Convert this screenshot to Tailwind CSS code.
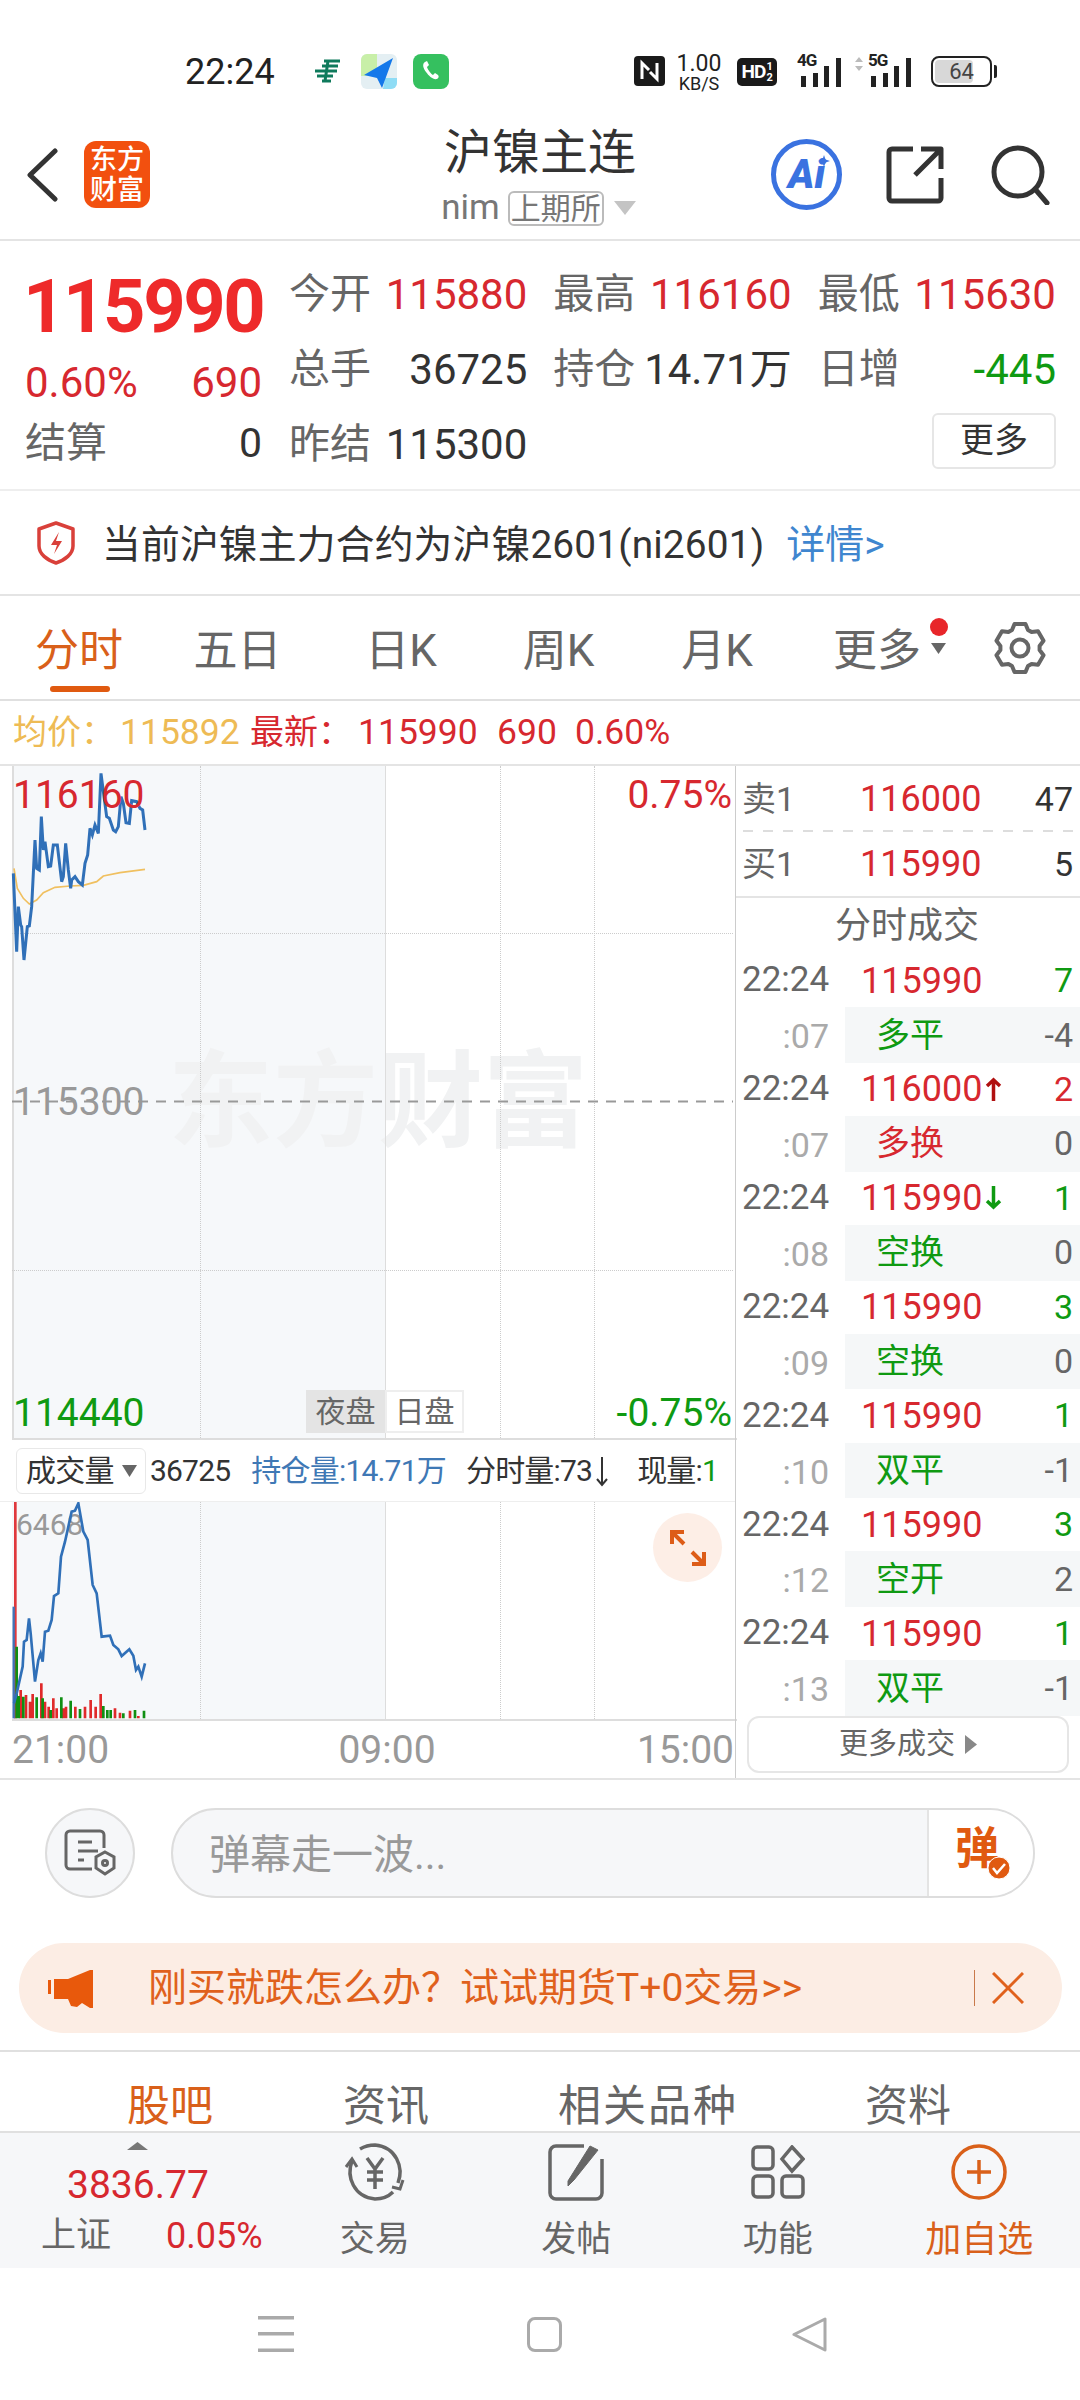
<!DOCTYPE html>
<html lang="zh">
<head>
    <meta charset="UTF-8">
    <meta name="viewport" content="width=device-width, initial-scale=1.0">
    <title>沪镍主连</title>
    <script src="https://cdn.jsdelivr.net/npm/@tailwindcss/browser@4"></script>
</head>
<body class="bg-white font-[Roboto,'Noto_Sans_CJK_SC',sans-serif] text-[#333]">
<div class="w-[1080px] h-[2400px] overflow-hidden flex flex-col">

    <!-- Status bar -->
    <div class="h-[110px] relative shrink-0">
        <span class="absolute left-[185px] top-[50px] text-[36px] leading-[44px] text-[#222]">22:24</span>
        <svg class="absolute left-[314px] top-[59px]" width="27" height="25" viewBox="0 0 27 25" fill="none" stroke="#0f7a5c" stroke-width="3"><path d="M10 2h16M8 7h16M1 12h22M3 17h16M8 22h9M14 2l-3 20"/></svg>
        <svg class="absolute left-[361px] top-[54px]" width="36" height="35" viewBox="0 0 36 35"><rect width="36" height="35" rx="6" fill="#e4eff3"/><path d="M0 6a6 6 0 0 1 6-6h10v22H0z" fill="#c8efa8"/><path d="M24 24h12v5a6 6 0 0 1-6 6h-8z" fill="#8fdcf5"/><path d="M32 4L3 21l13 3 5 10z" fill="#1478ea"/></svg>
        <svg class="absolute left-[413px] top-[54px]" width="36" height="35" viewBox="0 0 36 35"><rect width="36" height="35" rx="8" fill="#35c05f"/><path d="M12 8c-3 2-2 6 1 10s7 8 11 7c2-1 2-3 1-4l-3-2-2 2c-2-1-5-5-6-8l2-2-2-4z" fill="#fff"/></svg>
        <svg class="absolute left-[634px] top-[56px]" width="31" height="30" viewBox="0 0 31 30"><rect width="31" height="30" rx="4" fill="#1a1a1a"/><path d="M8 23V7l7 7M23 7v16l-7-7" fill="none" stroke="#fff" stroke-width="3"/></svg>
        <div class="absolute left-[670px] top-[52px] w-[58px] flex flex-col items-center text-[#222]">
            <span class="text-[23px] leading-[23px]">1.00</span>
            <span class="text-[18px] leading-[18px]">KB/S</span>
        </div>
        <div class="absolute left-[737px] top-[58px] w-[40px] h-[28px] bg-[#1a1a1a] rounded-[5px] flex items-center justify-center text-white text-[19px] font-bold tracking-[-1px]">HD<span class="text-[11px] leading-[11px] w-[6px] ml-[1px]">1 2</span></div>
        <div class="absolute left-[797px] top-[50px] w-[45px] h-[37px]">
            <span class="absolute left-0 top-0 text-[17px] leading-[20px] font-bold tracking-[-1px] text-[#222]">4G</span>
            <svg class="absolute left-0 bottom-0" width="45" height="29" viewBox="0 0 45 29" fill="#222"><rect x="4" y="18" width="5" height="11"/><rect x="16" y="15" width="5" height="14"/><rect x="27" y="8" width="5" height="21"/><rect x="39" y="0" width="5" height="29"/></svg>
        </div>
        <div class="absolute left-[854px] top-[50px] w-[61px] h-[37px]">
            <svg class="absolute left-0 top-[7px]" width="10" height="14" viewBox="0 0 10 14" fill="#bbb"><path d="M5 0l4 5H1zM5 14l4-5H1z"/></svg>
            <span class="absolute left-[14px] top-0 text-[17px] leading-[20px] font-bold tracking-[-1px] text-[#222]">5G</span>
            <svg class="absolute left-0 bottom-0" width="61" height="29" viewBox="0 0 61 29" fill="#222"><rect x="17" y="18" width="5" height="11"/><rect x="29" y="15" width="5" height="14"/><rect x="40" y="8" width="5" height="21"/><rect x="52" y="0" width="5" height="29"/></svg>
        </div>
        <div class="absolute left-[931px] top-[56px] w-[61px] h-[31px] border-2 border-[#222] rounded-[8px] p-[2px]">
            <div class="w-[38px] h-full bg-[#d8d8d8] rounded-[4px]"></div>
            <span class="absolute inset-0 flex items-center justify-center text-[22px] text-[#444]">64</span>
        </div>
        <div class="absolute left-[994px] top-[65px] w-[3px] h-[13px] bg-[#222] rounded-r-[2px]"></div>
    </div>

    <!-- Header -->
    <div class="h-[131px] shrink-0 border-b-2 border-[#e4e4e4] grid grid-cols-[1fr_auto_1fr]">
        <div class="flex items-center pl-[27px] gap-[26px]">
            <svg width="31" height="54" viewBox="0 0 31 54" fill="none" stroke="#333" stroke-width="5" stroke-linecap="round" stroke-linejoin="round"><path d="M28 3L3 27l25 24"/></svg>
            <div class="w-[66px] h-[67px] rounded-[12px] bg-[#f2500f] text-white text-[27px] leading-[30px] font-medium flex flex-col items-center justify-center">
                <span>东方</span><span>财富</span>
            </div>
        </div>
        <div class="flex flex-col items-center pt-[19px]">
            <div class="text-[48px] leading-[48px] text-[#333]">沪镍主连</div>
            <div class="mt-[13px] h-[36px] flex items-center text-[#777] -ml-[3px]">
                <span class="text-[35px] mr-[8px]">nim</span>
                <span class="w-[96px] h-[35px] border-2 border-[#bbb] rounded-[6px] text-[30px] leading-[31px] text-center">上期所</span>
                <svg class="ml-[10px]" width="22" height="14" viewBox="0 0 22 14"><path d="M0 0h22L11 14z" fill="#c4c4c4"/></svg>
            </div>
        </div>
        <div class="flex items-center justify-end pr-[30px]">
            <div class="relative w-[71px] h-[71px] rounded-full border-[5px] border-[#3a72e0] flex items-center justify-center text-[#3a72e0] text-[40px] font-black italic">Ai
                <svg class="absolute left-[42px] top-[11px]" width="12" height="12" viewBox="0 0 12 12"><path d="M6 0l1.500 4.500L12 6 7.500 7.500 6 12 4.500 7.500 0 6l4.500-1.500z" fill="#3a72e0"/></svg>
            </div>
            <svg class="ml-[44px]" width="58" height="58" viewBox="0 0 58 58" fill="none" stroke="#333" stroke-width="5" stroke-linejoin="round"><path d="M27 3H6a3 3 0 0 0-3 3v46a3 3 0 0 0 3 3h46a3 3 0 0 0 3-3V32M29 29L55 3M35 3h20v20"/></svg>
            <svg class="ml-[46px]" width="60" height="60" viewBox="0 0 60 60" fill="none" stroke="#333" stroke-width="5" stroke-linecap="round"><circle cx="28" cy="27" r="24"/><path d="M45 44l12 14"/></svg>
        </div>
    </div>

    <!-- Quote -->
    <div class="h-[250px] shrink-0 border-b-2 border-[#eee] pt-[16px] pl-[25px] pr-[24px] flex gap-[27px]">
        <div class="w-[237px] shrink-0">
            <div class="h-[99px] flex items-center -ml-[2px] text-[74px] font-bold tracking-[-2.4px] text-[#ee2a2a]">115990</div>
            <div class="h-[52px] flex items-center justify-between text-[42px] text-[#d7282f]"><span>0.60%</span><span>690</span></div>
            <div class="h-[72px] flex items-center justify-between text-[41px] text-[#666]"><span>结算</span><span class="text-[#333]">0</span></div>
        </div>
        <div class="flex-1 grid grid-cols-3 gap-x-[26px] grid-rows-[75px_75px_75px] text-[41px] text-[#666]">
            <div class="flex items-center justify-between"><span>今开</span><span class="text-[42px] text-[#d7282f]">115880</span></div>
            <div class="flex items-center justify-between"><span>最高</span><span class="text-[42px] text-[#d7282f]">116160</span></div>
            <div class="flex items-center justify-between"><span>最低</span><span class="text-[42px] text-[#d7282f]">115630</span></div>
            <div class="flex items-center justify-between"><span>总手</span><span class="text-[42px] text-[#333]">36725</span></div>
            <div class="flex items-center justify-between"><span>持仓</span><span class="text-[42px] text-[#333]">14.71万</span></div>
            <div class="flex items-center justify-between"><span>日增</span><span class="text-[42px] text-[#0f9a12]">-445</span></div>
            <div class="flex items-center justify-between"><span>昨结</span><span class="text-[42px] text-[#333]">115300</span></div>
            <div></div>
            <div class="flex items-center justify-end"><span class="w-[124px] h-[56px] -mt-[7px] border-2 border-[#e6e6e6] rounded-[6px] text-[34px] leading-[50px] text-center text-[#333]">更多</span></div>
        </div>
    </div>

    <!-- Main contract notice -->
    <div class="h-[105px] shrink-0 border-b-2 border-[#e4e4e4] flex items-center pl-[36px]">
        <svg width="40" height="44" viewBox="0 0 40 44" fill="none"><path d="M20 2l17 6v17c0 8-8 14-17 17C11 39 3 33 3 25V8z" stroke="#d9403a" stroke-width="3.5" stroke-linejoin="round"/><path d="M23 11l-8 13h6l-3 9 8-13h-6z" fill="#d9403a"/></svg>
        <span class="ml-[26px] mt-[6px] text-[38.8px] tracking-[0.15px] text-[#333]">当前沪镍主力合约为沪镍2601(ni2601)</span>
        <span class="ml-[22px] mt-[6px] text-[39px] text-[#3f86cf]">详情&gt;</span>
    </div>

    <!-- Period tabs -->
    <div class="h-[105px] shrink-0 border-b-2 border-[#e0e0e0] flex text-[44px] leading-[111px] text-[#666]">
        <div class="w-[158px] h-[103px] text-center relative text-[#d9601a]">分时<div class="absolute left-[50px] top-[90px] w-[60px] h-[6px] rounded-full bg-[#e05a10]"></div></div>
        <div class="w-[159px] h-[103px] text-center">五日</div>
        <div class="w-[168px] h-[103px] text-center">日K</div>
        <div class="w-[147px] h-[103px] text-center">周K</div>
        <div class="w-[170px] h-[103px] text-center">月K</div>
        <div class="w-[150px] h-[103px] text-center relative">更多
            <svg class="absolute left-[129px] top-[47px]" width="15" height="11" viewBox="0 0 15 11"><path d="M0 0h15L7.500 11z" fill="#666"/></svg>
            <div class="absolute left-[128px] top-[22px] w-[18px] h-[18px] rounded-full bg-[#e8262a]"></div>
        </div>
        <svg class="ml-[42px] mt-[26px]" width="52" height="52" viewBox="0 0 52 52" fill="none" stroke="#666" stroke-width="4" stroke-linejoin="round"><path d="M18 8L20.500 2H31.500L34 8L37.590 10.070L44.030 9.240L49.530 18.760L45.590 23.930V28.070L49.530 33.240L44.030 42.760L37.590 41.930L34 44L31.500 50H20.500L18 44L14.410 41.930L7.970 42.760L2.470 33.240L6.410 28.070V23.930L2.470 18.760L7.970 9.240L14.410 10.070z"/><circle cx="26" cy="26" r="8.500"/></svg>
    </div>

    <!-- Legend -->
    <div class="h-[63px] shrink-0 flex items-center pl-[13px] text-[34px] text-[#d7282f]">
        <span class="text-[#eebb55] w-[107px]">均价：</span>
        <span class="text-[#eebb55] text-[35.5px] w-[130px]">115892</span>
        <span class="w-[108px]">最新：</span>
        <span class="text-[35.5px] w-[139px]">115990</span>
        <span class="text-[35.5px] w-[78px]">690</span>
        <span class="text-[35.5px]">0.60%</span>
    </div>

    <!-- Chart + trades -->
    <div class="h-[1016px] shrink-0 border-y-2 border-[#e4e4e4] flex">
        <div class="w-[735px] shrink-0 flex flex-col">

            <!-- Price chart -->
            <div class="h-[672px] relative shrink-0 overflow-hidden">
                <div class="absolute left-[12px] top-0 bottom-0 w-[373px] bg-[#f6f8fa]"></div>
                <div class="absolute left-[168px] top-[284px] text-[105px] leading-[105px] font-bold text-[#f1f2f3] whitespace-nowrap">东方财富</div>
                <div class="absolute left-[12px] top-0 bottom-0 border-l-2 border-[#ddd]"></div>
                <div class="absolute left-[200px] top-0 bottom-0 border-l border-dotted border-[#ccc]"></div>
                <div class="absolute left-[385px] top-0 bottom-0 border-l border-[#ddd]"></div>
                <div class="absolute left-[500px] top-0 bottom-0 border-l border-dotted border-[#ccc]"></div>
                <div class="absolute left-[594px] top-0 bottom-0 border-l border-dotted border-[#ccc]"></div>
                <div class="absolute left-[12px] right-[2px] top-[167px] border-t border-dotted border-[#ccc]"></div>
                <div class="absolute left-[12px] right-[2px] top-[504px] border-t border-dotted border-[#ccc]"></div>
                <svg class="absolute left-[12px] top-[334px]" width="721" height="3" viewBox="0 0 721 3"><line x1="0" y1="1.500" x2="721" y2="1.500" stroke="#999" stroke-width="2" stroke-dasharray="10 8"/></svg>
                <svg class="absolute left-0 -top-[6px]" width="200" height="220" viewBox="0 0 600 660" fill="none">
                    <polyline stroke="#f0c060" stroke-width="5" points="42,325 52,385 70,415 88,432 110,420 130,398 165,382 210,378 250,376 290,365 310,348 360,338 435,328"/>
                    <polyline stroke="#3070b8" stroke-width="9" points="40,340 50,575 55,440 62,495 65,500 72,600 82,500 88,498 95,440 105,240 110,325 118,330 124,170 130,270 135,245 145,320 152,318 160,255 172,255 185,365 190,350 197,250 205,330 212,385 215,360 225,350 235,365 247,375 255,310 263,285 270,205 277,225 285,195 295,220 303,40 312,110 320,170 328,175 340,210 347,215 355,200 363,110 370,130 378,188 388,190 395,122 410,125 420,145 428,150 435,210"/>
                </svg>
                <span class="absolute left-[13px] top-[10px] text-[39px] leading-[39px] text-[#d7282f]">116160</span>
                <span class="absolute right-[3px] top-[10px] text-[39px] leading-[39px] text-[#d7282f]">0.75%</span>
                <span class="absolute left-[13px] top-[317px] text-[39px] leading-[39px] text-[#999]">115300</span>
                <span class="absolute left-[13px] top-[628px] text-[39px] leading-[39px] text-[#0f9a12]">114440</span>
                <span class="absolute right-[3px] top-[628px] text-[39px] leading-[39px] text-[#0f9a12]">-0.75%</span>
                <div class="absolute left-[306px] top-[624px] flex text-[30px] leading-[43px] text-[#666]">
                    <span class="w-[79px] h-[43px] bg-[#e4e4e4] text-center">夜盘</span>
                    <span class="w-[79px] h-[43px] border-2 border-[#eee] bg-white leading-[39px] text-center">日盘</span>
                </div>
            </div>

            <!-- Volume header -->
            <div class="h-[63px] shrink-0 border-t-2 border-[#ddd] ml-[12px] flex items-center text-[30px] text-[#333] -mr-[2px] tracking-[-0.8px]">
                <div class="ml-[4px] w-[130px] h-[46px] rounded-[6px] border border-[#e8e8e8] flex items-center pl-[9px] text-[30px]">成交量<svg class="ml-[8px]" width="15" height="12" viewBox="0 0 15 12"><path d="M0 0h15L7.500 12z" fill="#666"/></svg></div>
                <span class="ml-[4px]">36725</span>
                <span class="ml-[21px] text-[#3f78b5]">持仓量:14.71万</span>
                <span class="ml-[20px]">分时量:73</span>
                <svg class="ml-[3px]" width="14" height="32" viewBox="0 0 14 32" fill="none" stroke="#333" stroke-width="2"><path d="M7 2v28M2 24l5 6 5-6"/></svg>
                <span class="ml-[28px]">现量:<span class="text-[#0f9a12]">1</span></span>
            </div>

            <!-- Volume chart -->
            <div class="h-[218px] relative shrink-0 overflow-hidden border-t border-[#eee]">
                <div class="absolute left-[12px] top-0 bottom-0 w-[373px] bg-[#f6f8fa]"></div>
                <div class="absolute left-[200px] top-0 bottom-0 border-l border-dotted border-[#ccc]"></div>
                <div class="absolute left-[385px] top-0 bottom-0 border-l border-[#ddd]"></div>
                <div class="absolute left-[500px] top-0 bottom-0 border-l border-dotted border-[#ccc]"></div>
                <div class="absolute left-[594px] top-0 bottom-0 border-l border-dotted border-[#ccc]"></div>
                <span class="absolute left-[16px] top-[8px] text-[30px] leading-[30px] text-[#999]">6468</span>
                <svg class="absolute left-0 -top-[12px]" width="200" height="240" viewBox="0 0 600 720" fill="none">
                    <path d="M46 36V685" stroke="#e0383c" stroke-width="8"/>
                    <path d="M41 350V685" stroke="#3f74b8" stroke-width="7"/>
                    <path stroke="#e02a2a" stroke-width="8" d="M62 685V600M78 685V615M90 685V635M98 685V612M124 685V580M135 685V635M146 685V650M160 685V625M170 685V655M190 685V655M198 685V650M226 685V650M255 685V650M272 685V630M287 685V650M302 685V612M345 685V655M360 685V668M390 685V662M415 685V678"/>
                    <path stroke="#0f8f12" stroke-width="8" d="M50 685V470M56 685V618M70 685V620M110 685V622M128 685V625M152 685V660M184 685V622M212 685V632M240 685V657M310 685V648M322 685V660M332 685V660M370 685V670M405 685V660M432 685V662"/>
                    <polyline stroke="#3070b8" stroke-width="8" points="42,640 50,610 68,530 72,455 80,450 87,385 92,430 105,575 115,510 122,490 128,515 135,425 145,422 155,390 162,318 175,310 183,200 195,155 215,65 225,62 235,40 250,125 263,150 278,285 290,310 305,440 330,437 340,465 355,478 365,498 388,478 400,497 408,540 415,530 425,560 435,520"/>
                </svg>
                <div class="absolute left-[653px] top-[11px] w-[69px] h-[69px] rounded-full bg-[#fdeee6] flex items-center justify-center">
                    <svg width="36" height="36" viewBox="0 0 36 36" fill="none" stroke="#dd5c17" stroke-width="4"><path d="M2 14V2h12M2 2l12 12M34 22v12H22M34 34L22 22"/></svg>
                </div>
            </div>

            <!-- Time axis -->
            <div class="flex-1 border-t-2 border-[#ddd] ml-[12px] -mr-[2px] flex items-center justify-between text-[39px] text-[#999] pr-[3px]">
                <span>21:00</span><span class="ml-[28px]">09:00</span><span>15:00</span>
            </div>
        </div>

        <!-- Order book and ticks -->
        <div class="flex-1 border-l border-[#ccc] flex flex-col text-[34px] overflow-hidden">
            <div class="h-[64px] shrink-0 flex items-center pl-[6px] pr-[7px] pt-[2px]">
                <span class="w-[118px] text-[#666]">卖1</span><span class="text-[36px] text-[#d7282f]">116000</span><span class="flex-1 text-right text-[#333]">47</span>
            </div>
            <svg class="ml-[7px] shrink-0" width="330" height="2" viewBox="0 0 330 2"><line x1="0" y1="1" x2="330" y2="1" stroke="#ddd" stroke-width="2" stroke-dasharray="10 10"/></svg>
            <div class="h-[66px] shrink-0 flex items-center pl-[6px] pr-[7px] border-b-2 border-[#e4e4e4]">
                <span class="w-[118px] text-[#666]">买1</span><span class="text-[36px] text-[#d7282f]">115990</span><span class="flex-1 text-right text-[#333]">5</span>
            </div>
            <div class="h-[56px] shrink-0 flex items-center justify-center text-[36px] text-[#666] pr-[2px]">分时成交</div>

            <div class="h-[53.2px] shrink-0 flex items-center pl-[6px] pr-[7px]"><span class="w-[119px] text-[35px] text-[#666]">22:24</span><span class="text-[36px] text-[#d7282f]">115990</span><span class="flex-1 text-right text-[#0f9a12]">7</span></div>
            <div class="h-[55.67px] shrink-0 flex"><span class="w-[109px] pr-[16px] text-right text-[#aaa] leading-[58px]">:07</span><div class="flex-1 bg-[#f5f7f8] pl-[31px] pr-[7px] flex items-center justify-between"><span class="text-[#0f9a12]">多平</span><span class="text-[#666]">-4</span></div></div>
            <div class="h-[53.2px] shrink-0 flex items-center pl-[6px] pr-[7px]"><span class="w-[119px] text-[35px] text-[#666]">22:24</span><span class="text-[36px] text-[#d7282f]">116000</span><svg class="ml-[3px]" width="17" height="24" viewBox="0 0 17 24" fill="none" stroke="#b01010" stroke-width="3.5"><path d="M8.500 24V3M2 9l6.500-6 6.500 6"/></svg><span class="flex-1 text-right text-[#d7282f]">2</span></div>
            <div class="h-[55.67px] shrink-0 flex"><span class="w-[109px] pr-[16px] text-right text-[#aaa] leading-[58px]">:07</span><div class="flex-1 bg-[#f5f7f8] pl-[31px] pr-[7px] flex items-center justify-between"><span class="text-[#d7282f]">多换</span><span class="text-[#666]">0</span></div></div>
            <div class="h-[53.2px] shrink-0 flex items-center pl-[6px] pr-[7px]"><span class="w-[119px] text-[35px] text-[#666]">22:24</span><span class="text-[36px] text-[#d7282f]">115990</span><svg class="ml-[3px]" width="17" height="24" viewBox="0 0 17 24" fill="none" stroke="#0f9a12" stroke-width="3.5"><path d="M8.500 0v21M2 15l6.500 6 6.500-6"/></svg><span class="flex-1 text-right text-[#0f9a12]">1</span></div>
            <div class="h-[55.67px] shrink-0 flex"><span class="w-[109px] pr-[16px] text-right text-[#aaa] leading-[58px]">:08</span><div class="flex-1 bg-[#f5f7f8] pl-[31px] pr-[7px] flex items-center justify-between"><span class="text-[#0f9a12]">空换</span><span class="text-[#666]">0</span></div></div>
            <div class="h-[53.2px] shrink-0 flex items-center pl-[6px] pr-[7px]"><span class="w-[119px] text-[35px] text-[#666]">22:24</span><span class="text-[36px] text-[#d7282f]">115990</span><span class="flex-1 text-right text-[#0f9a12]">3</span></div>
            <div class="h-[55.67px] shrink-0 flex"><span class="w-[109px] pr-[16px] text-right text-[#aaa] leading-[58px]">:09</span><div class="flex-1 bg-[#f5f7f8] pl-[31px] pr-[7px] flex items-center justify-between"><span class="text-[#0f9a12]">空换</span><span class="text-[#666]">0</span></div></div>
            <div class="h-[53.2px] shrink-0 flex items-center pl-[6px] pr-[7px]"><span class="w-[119px] text-[35px] text-[#666]">22:24</span><span class="text-[36px] text-[#d7282f]">115990</span><span class="flex-1 text-right text-[#0f9a12]">1</span></div>
            <div class="h-[55.67px] shrink-0 flex"><span class="w-[109px] pr-[16px] text-right text-[#aaa] leading-[58px]">:10</span><div class="flex-1 bg-[#f5f7f8] pl-[31px] pr-[7px] flex items-center justify-between"><span class="text-[#0f9a12]">双平</span><span class="text-[#666]">-1</span></div></div>
            <div class="h-[53.2px] shrink-0 flex items-center pl-[6px] pr-[7px]"><span class="w-[119px] text-[35px] text-[#666]">22:24</span><span class="text-[36px] text-[#d7282f]">115990</span><span class="flex-1 text-right text-[#0f9a12]">3</span></div>
            <div class="h-[55.67px] shrink-0 flex"><span class="w-[109px] pr-[16px] text-right text-[#aaa] leading-[58px]">:12</span><div class="flex-1 bg-[#f5f7f8] pl-[31px] pr-[7px] flex items-center justify-between"><span class="text-[#0f9a12]">空开</span><span class="text-[#666]">2</span></div></div>
            <div class="h-[53.2px] shrink-0 flex items-center pl-[6px] pr-[7px]"><span class="w-[119px] text-[35px] text-[#666]">22:24</span><span class="text-[36px] text-[#d7282f]">115990</span><span class="flex-1 text-right text-[#0f9a12]">1</span></div>
            <div class="h-[55.67px] shrink-0 flex"><span class="w-[109px] pr-[16px] text-right text-[#aaa] leading-[58px]">:13</span><div class="flex-1 bg-[#f5f7f8] pl-[31px] pr-[7px] flex items-center justify-between"><span class="text-[#0f9a12]">双平</span><span class="text-[#666]">-1</span></div></div>

            <div class="ml-[11px] mr-[11px] h-[57px] shrink-0 border-2 border-[#e6e6e6] rounded-[12px] flex items-center justify-center text-[29px] text-[#666]">更多成交<svg class="ml-[10px]" width="12" height="19" viewBox="0 0 12 19"><path d="M0 0l12 9.500L0 19z" fill="#888"/></svg></div>
        </div>
    </div>

    <!-- Danmaku input -->
    <div class="h-[162px] shrink-0 pl-[45px] pt-[28px] flex items-start">
        <div class="w-[90px] h-[90px] rounded-full bg-[#f6f7f9] border-2 border-[#ddd] flex items-center justify-center">
            <svg width="52" height="50" viewBox="0 0 52 50" fill="none" stroke="#666" stroke-width="3"><path d="M40 20V7a4 4 0 0 0-4-4H6a4 4 0 0 0-4 4v30a4 4 0 0 0 4 4h22M14 14h14M14 23h20M14 32h6"/><path d="M41 24l9 5v11l-9 6-9-6V29z"/><circle cx="41" cy="35" r="2.500"/></svg>
        </div>
        <div class="ml-[36px] w-[864px] h-[90px] rounded-full bg-[#f6f7f9] border-2 border-[#ddd] flex overflow-hidden">
            <div class="flex-1 pl-[36px] text-[41px] leading-[91px] text-[#999]">弹幕走一波...</div>
            <div class="w-[106px] bg-white border-l-2 border-[#e4e4e4] relative">
                <span class="absolute left-[26px] top-[14px] text-[44px] leading-[50px] font-bold text-[#e05a10]">弹</span>
                <svg class="absolute left-[58px] top-[46px]" width="24" height="24" viewBox="0 0 24 24"><circle cx="12" cy="12" r="11" fill="#e05a10" stroke="#fff" stroke-width="1"/><path d="M6 12l4 5 8-9" fill="none" stroke="#fff" stroke-width="2.500"/></svg>
            </div>
        </div>
    </div>

    <!-- Promo banner -->
    <div class="shrink-0 mx-[19px] w-[1043px] h-[90px] mt-[1px] rounded-full bg-[#fcede4] flex items-center text-[#e0611c]">
        <svg class="ml-[29px]" width="46" height="40" viewBox="0 0 46 40" fill="#e8590c"><rect x="0" y="12" width="3" height="14"/><path d="M6 11h14L42 2h3v38h-3l-8-5-5 4-6-1-3-7H6z"/></svg>
        <span class="ml-[54px] text-[39px] whitespace-nowrap">刚买就跌怎么办？试试期货T+0交易&gt;&gt;</span>
        <div class="ml-auto h-[36px] border-l border-[#c9794a]"></div>
        <svg class="ml-[17px] mr-[38px]" width="32" height="32" viewBox="0 0 32 32" fill="none" stroke="#e0611c" stroke-width="3"><path d="M1 1l30 30M31 1L1 31"/></svg>
    </div>

    <!-- Content tabs -->
    <div class="mt-[17px] h-[83px] shrink-0 border-t-2 border-b-2 border-[#e0e0e0] relative text-[43px] leading-[43px] text-[#666]">
        <span class="absolute left-[127px] top-[33px] text-[#d9601a]">股吧</span>
        <span class="absolute left-[343px] top-[33px]">资讯</span>
        <span class="absolute left-[558px] top-[33px] tracking-[2px]">相关品种</span>
        <span class="absolute left-[865px] top-[33px]">资料</span>
    </div>

    <!-- Bottom toolbar -->
    <div class="h-[135px] shrink-0 bg-[#f6f7f9] flex text-[35px] text-[#666]">
        <div class="w-[274px] shrink-0 flex flex-col">
            <svg class="mt-[9px] ml-[127px]" width="21" height="8" viewBox="0 0 21 8"><path d="M10.500 0L21 8H0z" fill="#777"/></svg>
            <div class="mt-[13px] pl-[67px] text-[39px] leading-[44px] text-[#d7282f]">3836.77</div>
            <div class="mt-[9px] pl-[41px] flex items-center text-[35px] leading-[40px]"><span>上证</span><span class="ml-[55px] text-[36px] text-[#d7282f]">0.05%</span></div>
        </div>
        <div class="w-[201.5px] flex flex-col items-center pt-[10px]">
            <svg width="66" height="58" viewBox="0 0 66 58" fill="none" stroke="#666" stroke-width="3.5"><path d="M10 18C4 34 12 54 33 56c7 0 13-2 18-7M56 40C62 24 54 4 33 2c-6 0-10 1-15 4"/><path d="M4 24l6-8 5 8M50 44l8 2 3-9" stroke-width="3"/><path d="M25 15l8 11 8-11M33 26v20M25 29h16M25 37h16"/></svg>
            <span class="mt-[20px] leading-[38px]">交易</span>
        </div>
        <div class="w-[201.5px] flex flex-col items-center pt-[10px]">
            <svg width="56" height="58" viewBox="0 0 56 58" fill="none" stroke="#666" stroke-width="3.5"><path d="M36 3H8a6 6 0 0 0-6 6v41a6 6 0 0 0 6 6h40a6 6 0 0 0 6-6V16"/><path d="M20 38L42 3l8 4-24 30-6 6z" fill="#666" stroke-width="1"/></svg>
            <span class="mt-[20px] leading-[38px]">发帖</span>
        </div>
        <div class="w-[201.5px] flex flex-col items-center pt-[12px]">
            <svg width="54" height="54" viewBox="0 0 54 54" fill="none" stroke="#666" stroke-width="3.5"><rect x="2" y="2" width="20" height="22" rx="4"/><rect x="2" y="31" width="20" height="21" rx="4"/><rect x="31" y="31" width="21" height="21" rx="4"/><path d="M41 2l11 12-11 12-10-12z"/></svg>
            <span class="mt-[22px] leading-[38px]">功能</span>
        </div>
        <div class="w-[201.5px] flex flex-col items-center pt-[10px] text-[#d9601a]">
            <svg width="56" height="58" viewBox="0 0 56 58" fill="none" stroke="#d9601a" stroke-width="3.5"><circle cx="28" cy="29" r="26"/><path d="M16 29h24M28 17v24"/></svg>
            <span class="mt-[20px] text-[36px] leading-[38px]">加自选</span>
        </div>
    </div>

    <!-- Android nav -->
    <div class="flex-1 relative">
        <svg class="absolute left-[258px] top-[48px]" width="36" height="36" viewBox="0 0 36 36" fill="#aaa"><rect width="36" height="3.500"/><rect y="16" width="36" height="3.500"/><rect y="32.500" width="36" height="3.500"/></svg>
        <div class="absolute left-[527px] top-[49px] w-[35px] h-[35px] rounded-[8px] border-[3px] border-[#aaa]"></div>
        <svg class="absolute left-[792px] top-[49px]" width="35" height="35" viewBox="0 0 35 35" fill="none" stroke="#aaa" stroke-width="3" stroke-linejoin="round"><path d="M33 2v31L2 17.500z"/></svg>
    </div>
</div>
</body>
</html>
